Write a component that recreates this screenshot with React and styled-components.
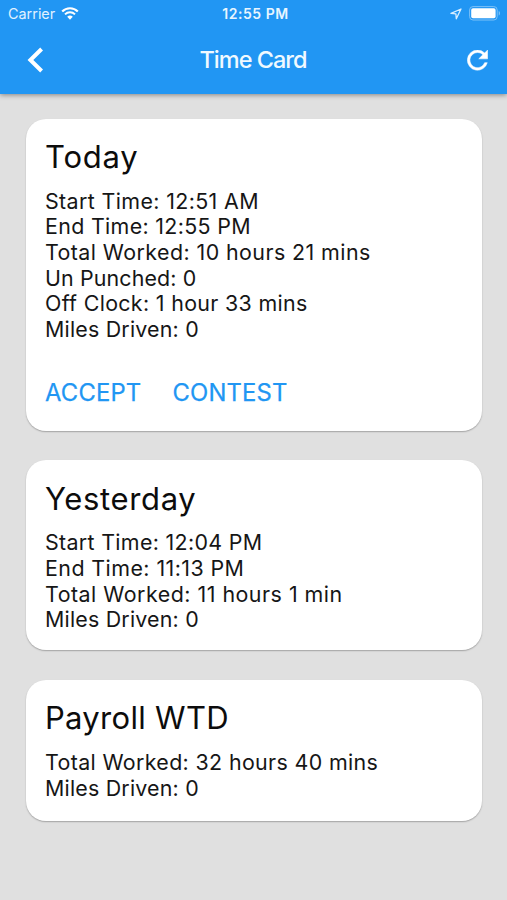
import styled, { createGlobalStyle } from "styled-components"

const GlobalStyle = createGlobalStyle`
  * {
    box-sizing: border-box;
  }

  body {
    margin: 0;
    background-color: #e0e0e0;
    font-family: Inter, "Liberation Sans", sans-serif;
  }
`

const StyledApp = styled.div`
  min-height: 900px;
  background-color: #e0e0e0;
`

const Header = styled.header`
  height: 94px;
  background-color: #2196f3;
  color: #fff;
  box-shadow: 0 1px 5px rgba(0, 0, 0, 0.42);
`

const StatusBar = styled.div`
  display: grid;
  grid-template-columns: 1fr auto 1fr;
  align-items: center;
  height: 27px;
  padding: 0 6px 0 8px;
`

const Carrier = styled.div`
  display: flex;
  align-items: center;
  gap: 6px;
  font-size: 14.4px;
  letter-spacing: 0;
  color: #e0f1ff;
`

const Clock = styled.div`
  padding-left: 2px;
  font-size: 14px;
  font-weight: 600;
  letter-spacing: 0.55px;
  color: #e8f5ff;
`

const Indicators = styled.div`
  display: flex;
  align-items: center;
  justify-content: flex-end;
  gap: 7px;
`

const NavBar = styled.div`
  display: grid;
  grid-template-columns: 1fr auto 1fr;
  align-items: center;
  height: 66px;
  padding: 0 19px 0 27px;
`

const Title = styled.h1`
  margin: 0 9px 2px 0;
  font-size: 23.5px;
  font-weight: 500;
  letter-spacing: -1px;
  color: #f0f9ff;
`

const IconButton = styled.button`
  display: flex;
  justify-self: ${({ $end }) => ($end ? "end" : "start")};
  padding: 0;
  border: none;
  background-color: transparent;
  color: inherit;
`

const Cards = styled.main`
  display: flex;
  flex-direction: column;
  gap: 29.5px;
  padding: 24.5px 25px 0 25.5px;
`

const Card = styled.section`
  padding: 19.5px 20px ${({ $bottom }) => $bottom}px 19.5px;
  border-radius: 20px;
  background-color: #fff;
  box-shadow: 0 1px 1.5px rgba(0, 0, 0, 0.28);
`

const CardTitle = styled.h2`
  margin: 0 0 13.8px;
  font-size: 31px;
  font-weight: 400;
  line-height: 37px;
  letter-spacing: ${({ $spacing }) => $spacing}px;
  color: #0c0c0c;
`

const Row = styled.p`
  margin: 0;
  font-size: 21.4px;
  line-height: 25.67px;
  letter-spacing: ${({ $spacing = 0.33 }) => $spacing}px;
  white-space: nowrap;
  color: #161616;
`

const Actions = styled.div`
  display: flex;
  gap: 31px;
  margin-top: 35px;
  padding-bottom: 3px;
`

const Action = styled.button`
  padding: 0;
  border: none;
  background-color: transparent;
  font-family: inherit;
  font-size: 23.8px;
  font-weight: 400;
  -webkit-text-stroke: 0.25px;
  line-height: 30px;
  letter-spacing: 0.2px;
  color: #2196f3;
`

const cards = [
  {
    title: "Today",
    spacing: 0.8,
    bottom: 19.7,
    rows: [
      { text: "Start Time: 12:51 AM", spacing: 0.38 },
      { text: "End Time: 12:55 PM" },
      { text: "Total Worked: 10 hours 21 mins", spacing: 0.43 },
      { text: "Un Punched: 0", spacing: 0.13 },
      { text: "Off Clock: 1 hour 33 mins" },
      { text: "Miles Driven: 0", spacing: 0.2 },
    ],
    actions: ["ACCEPT", "CONTEST"],
  },
  {
    title: "Yesterday",
    spacing: 0.65,
    bottom: 17.2,
    rows: [
      { text: "Start Time: 12:04 PM" },
      { text: "End Time: 11:13 PM", spacing: 0.44 },
      { text: "Total Worked: 11 hours 1 min", spacing: 0.5 },
      { text: "Miles Driven: 0", spacing: 0.2 },
    ],
  },
  {
    title: "Payroll WTD",
    spacing: 0.3,
    bottom: 19.7,
    rows: [
      { text: "Total Worked: 32 hours 40 mins", spacing: 0.36 },
      { text: "Miles Driven: 0", spacing: 0.2 },
    ],
  },
]

function WifiIcon() {
  return (
    <svg width="18" height="13" viewBox="0 0 18 13" fill="none">
      <path d="M1.2 4.5a11 11 0 0 1 15.6 0" stroke="#fff" strokeWidth="2.2" />
      <path d="M4 7.4a7 7 0 0 1 10 0" stroke="#fff" strokeWidth="2" />
      <path d="M9 12.7 6.2 9.8a4 4 0 0 1 5.6 0z" fill="#fff" />
    </svg>
  )
}

function LocationIcon() {
  return (
    <svg width="12" height="12" viewBox="0 0 12 12" fill="none">
      <path
        d="M11 1 1 5.4l4.9.5.4 4.9z"
        stroke="#d8eeff"
        strokeWidth="1.3"
        strokeLinejoin="round"
      />
    </svg>
  )
}

function BatteryIcon() {
  return (
    <svg width="32" height="15" viewBox="0 0 32 15">
      <rect
        x="0.6"
        y="0.6"
        width="27.6"
        height="13.4"
        rx="3.4"
        fill="none"
        stroke="#7cc1f8"
        strokeWidth="1"
      />
      <rect x="2.2" y="2.3" width="24.4" height="10" rx="1.8" fill="#fff" />
      <path d="M29.7 5v4.6c1.8-.7 1.8-3.9 0-4.6z" fill="#7cc1f8" />
    </svg>
  )
}

export default function App() {
  return (
    <StyledApp>
      <GlobalStyle />
      <Header>
        <StatusBar>
          <Carrier>
            Carrier
            <WifiIcon />
          </Carrier>
          <Clock>12:55 PM</Clock>
          <Indicators>
            <LocationIcon />
            <BatteryIcon />
          </Indicators>
        </StatusBar>
        <NavBar>
          <IconButton aria-label="Back">
            <svg width="17" height="26" viewBox="0 0 17 26" fill="none">
              <path d="M14.6 2 3.4 13l11.2 11" stroke="#fff" strokeWidth="4" />
            </svg>
          </IconButton>
          <Title>Time Card</Title>
          <IconButton $end aria-label="Refresh">
            <svg width="21" height="21" viewBox="3.7 4 16.6 16.6">
              <path
                fill="#fff"
                stroke="#fff"
                strokeWidth="0.4"
                d="M17.65 6.35A7.96 7.96 0 0 0 12 4a8 8 0 1 0 7.73 10h-2.08A6 6 0 1 1 12 6c1.66 0 3.14.69 4.22 1.78L13 11h7V4z"
              />
            </svg>
          </IconButton>
        </NavBar>
      </Header>
      <Cards>
        {cards.map(({ title, spacing, bottom, rows, actions }) => (
          <Card key={title} $bottom={bottom}>
            <CardTitle $spacing={spacing}>{title}</CardTitle>
            {rows.map((row) => (
              <Row key={row.text} $spacing={row.spacing}>
                {row.text}
              </Row>
            ))}
            {actions && (
              <Actions>
                {actions.map((action) => (
                  <Action key={action}>{action}</Action>
                ))}
              </Actions>
            )}
          </Card>
        ))}
      </Cards>
    </StyledApp>
  )
}
